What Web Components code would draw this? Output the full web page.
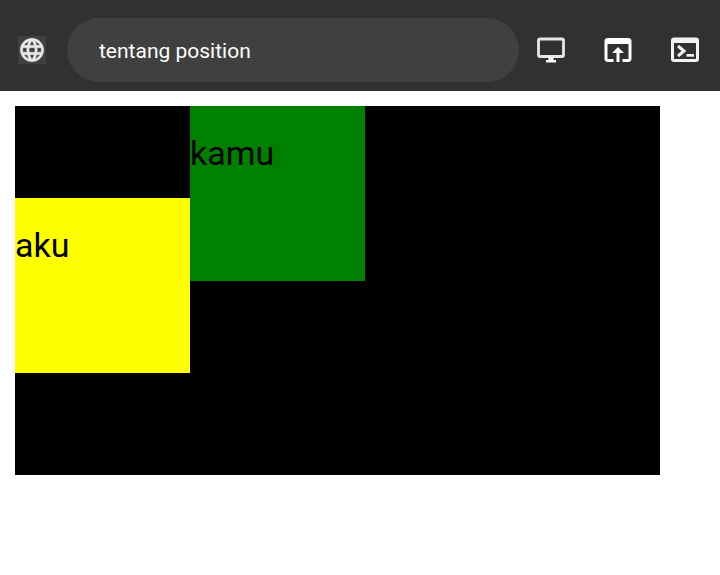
<!DOCTYPE html>
<html lang="id">
<head>
<meta charset="utf-8">
<title>tentang position</title>
<style>
body { margin: 0; background: #fff; color: #000; font-family: Roboto, "Liberation Sans", sans-serif; }
</style>
</head>
<body>
<app-toolbar>
  <icon-button slot="site" label="Situs" class="site">
    <svg viewBox="0 0 24 24" fill="#e8e8e8"><path d="M11.99 2C6.47 2 2 6.48 2 12s4.47 10 9.99 10C17.52 22 22 17.52 22 12S17.52 2 11.99 2zm6.93 6h-2.95c-.32-1.25-.78-2.45-1.38-3.56 1.84.63 3.37 1.91 4.33 3.56zM12 4.04c.83 1.2 1.48 2.53 1.91 3.96h-3.82c.43-1.43 1.08-2.76 1.91-3.96zM4.26 14C4.1 13.36 4 12.69 4 12s.1-1.36.26-2h3.38c-.08.66-.14 1.32-.14 2s.06 1.34.14 2H4.26zm.82 2h2.95c.32 1.25.78 2.45 1.38 3.56-1.84-.63-3.37-1.9-4.33-3.56zm2.95-8H5.08c.96-1.66 2.49-2.93 4.33-3.56C8.81 5.55 8.35 6.75 8.03 8zM12 19.96c-.83-1.2-1.48-2.53-1.91-3.96h3.82c-.43 1.43-1.08 2.76-1.91 3.96zM14.34 14H9.66c-.09-.66-.16-1.32-.16-2s.07-1.35.16-2h4.68c.09.65.16 1.32.16 2s-.07 1.34-.16 2zm.25 5.56c.6-1.11 1.06-2.31 1.38-3.56h2.95c-.96 1.65-2.49 2.93-4.33 3.56zM16.36 14c.08-.66.14-1.32.14-2s-.06-1.34-.14-2h3.38c.16.64.26 1.31.26 2s-.1 1.36-.26 2h-3.38z" stroke="#e8e8e8" stroke-width=".4"/></svg>
  </icon-button>
  <address-field value="tentang position"></address-field>
  <icon-button slot="actions" label="Mode desktop">
    <svg viewBox="0 0 36 36"><rect x="5.500" y="7" width="25" height="17.500" rx="1.500" fill="none" stroke="#e6e6e6" stroke-width="2.800"/><path d="M15.500 25h5v3h2.500v2.500h-10V28h2.500z" fill="#fff"/></svg>
  </icon-button>
  <icon-button slot="actions" label="Buka di browser">
    <svg viewBox="0 0 24 24" fill="#fff"><path d="M19 4H5c-1.110 0-2 .9-2 2v12c0 1.100.89 2 2 2h4v-2H5V8h14v10h-4v2h4c1.100 0 2-.9 2-2V6c0-1.100-.89-2-2-2zm-7 6l-4 4h3v6h2v-6h3l-4-4z"/></svg>
  </icon-button>
  <icon-button slot="actions" label="Konsol">
    <svg viewBox="0 0 36 36"><path fill="#f2f2f2" fill-rule="evenodd" d="M7 5.500h22a3 3 0 0 1 3 3v18.500a3 3 0 0 1-3 3H7a3 3 0 0 1-3-3V8.500a3 3 0 0 1 3-3zM7 11v16h22V11z"/><path d="M11 14l6 5-6 5" fill="none" stroke="#f2f2f2" stroke-width="3"/><path fill="#f2f2f2" d="M19.500 22h7.500v2.700h-7.500z"/></svg>
  </icon-button>
</app-toolbar>
<demo-stage>
  <demo-box class="aku" tone="yellow">aku</demo-box>
  <demo-box tone="green">kamu</demo-box>
</demo-stage>

<script>
function define(name, html, setup) {
  const template = document.createElement('template');
  template.innerHTML = html;
  customElements.define(name, class extends HTMLElement {
    connectedCallback() {
      if (this.shadowRoot) return;
      this.attachShadow({ mode: 'open' }).append(template.content.cloneNode(true));
      if (setup) setup(this, this.shadowRoot);
    }
  });
}

define('icon-button', `
  <style>
    :host { display: block; flex: none; width: 36px; height: 36px; }
    :host(.site) { width: 28px; height: 28px; background: #404040; }
    button { display: block; width: 100%; height: 100%; padding: 0; border: 0; background: none; cursor: pointer; }
    ::slotted(svg) { display: block; width: 100%; height: 100%; }
  </style>
  <button type="button"><slot></slot></button>`,
  (host, root) => root.querySelector('button').setAttribute('aria-label', host.getAttribute('label')));

define('address-field', `
  <style>
    :host { display: block; flex: 1; min-width: 0; }
    input { display: block; box-sizing: border-box; width: 100%; height: 64px; padding: 2px 32px 0; border: 0;
      border-radius: 32px; outline: 0; background: #404040; color: #fff; font: 21px/24px Roboto, "Liberation Sans", sans-serif; }
  </style>
  <input type="text" aria-label="Alamat">`,
  (host, root) => { root.querySelector('input').value = host.getAttribute('value'); });

define('app-toolbar', `
  <style>
    :host { display: block; }
    header { display: flex; align-items: center; padding: 18px 17px 9px 18px; background: #313131; }
    .field { display: flex; flex: 1; min-width: 0; margin: 0 14px 0 21px; }
    .actions { display: flex; gap: 31px; }
  </style>
  <header>
    <slot name="site"></slot>
    <div class="field"><slot></slot></div>
    <div class="actions"><slot name="actions"></slot></div>
  </header>`);

define('demo-stage', `
  <style>
    :host { display: flex; align-items: flex-start; box-sizing: border-box; min-height: 369px; margin: 15px 60px 15px 15px; background: #000; }
    ::slotted(.aku) { margin-top: 92px; }
  </style>
  <slot></slot>`);

define('demo-box', `
  <style>
    :host { display: block; flex: none; box-sizing: border-box; width: 175px; height: 175px; padding-top: 27px; }
    :host([tone="yellow"]) { background: yellow; }
    :host([tone="green"]) { background: green; }
    p { margin: 0; font-size: 34px; line-height: 40px; }
  </style>
  <p><slot></slot></p>`);
</script>
</body>
</html>
